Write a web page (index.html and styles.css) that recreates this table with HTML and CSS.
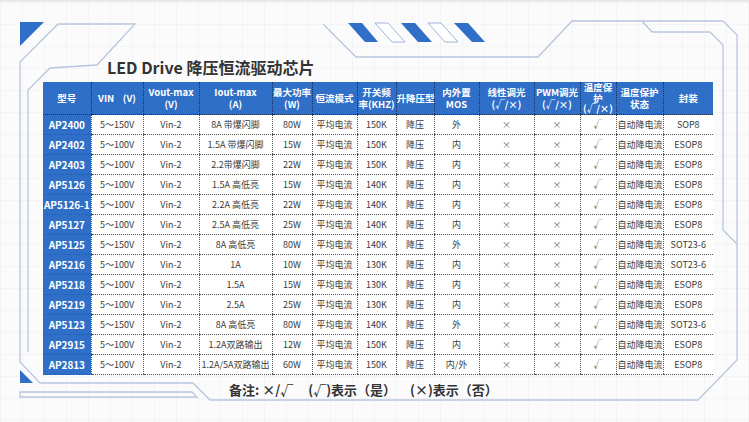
FILE: index.html
```html
<!DOCTYPE html>
<html lang="zh-CN">
<head>
<meta charset="utf-8">
<title>LED Drive 降压恒流驱动芯片</title>
<link rel="stylesheet" href="styles.css">
</head>
<body>
<div class="page">
  <svg class="decor" width="749" height="422" viewBox="0 0 749 422" aria-hidden="true">
    <g class="line">
      <path d="M28,352 L28,90 L50,68 L97,65 L135,24 L58,24 L20,62 L20,362 L40,383 L193,383 L210,400 L698,400 L737,360 L737,35 L723,21 L572,21 L538,57 L356,57 L323,24"/>
      <path d="M642,21 L652,32 L710,32 L723,45 L723,230 L737,244"/>
      <path d="M20,392 L192,392 L197,397 L20,397 Z"/>
    </g>
    <g class="blue">
      <polygon points="20,22 44,22 20,46"/>
      <polygon points="20,370 20,383 33,383"/>
      <polygon points="348,23 362,23 378,42 365,42"/>
      <polygon points="401,23 415,23 432,42 418,42"/>
      <polygon points="454,23 468,23 485,42 472,42"/>
    </g>
    <g class="hollow">
      <polygon points="375,23 388,23 405,42 392,42"/>
      <polygon points="428,23 441,23 458,42 445,42"/>
    </g>
  </svg>
  <div class="content">
    <h1 class="title">LED Drive 降压恒流驱动芯片</h1>
    <table class="spec">
      <colgroup>
        <col class="w48"><col class="w52"><col class="w56"><col class="w73"><col class="w40"><col class="w45"><col class="w39"><col class="w38"><col class="w45"><col class="w55"><col class="w46"><col class="w36"><col class="w47"><col class="w50">
      </colgroup>
      <thead>
        <tr>
          <th>型号</th>
          <th class="pre">VIN    (V)</th>
          <th>Vout-max<br>(V)</th>
          <th>Iout-max<br>(A)</th>
          <th>最大功率<br>(W)</th>
          <th>恒流模式</th>
          <th>开关频<br>率(KHZ)</th>
          <th>升降压型</th>
          <th>内外置<br>MOS</th>
          <th>线性调光<br>(√/×)</th>
          <th>PWM调光<br>(√/×)</th>
          <th class="tri">温度保<br>护<br>(√/×)</th>
          <th>温度保护<br>状态</th>
          <th>封装</th>
        </tr>
      </thead>
      <tbody>
        <tr><td class="model">AP2400</td><td>5～150V</td><td>Vin-2</td><td>8A 带爆闪脚</td><td>80W</td><td>平均电流</td><td>150K</td><td>降压</td><td>外</td><td class="mk">×</td><td class="mk">×</td><td class="mk">√</td><td class="left">自动降电流</td><td>SOP8</td></tr>
        <tr><td class="model">AP2402</td><td>5～100V</td><td>Vin-2</td><td>1.5A 带爆闪脚</td><td>15W</td><td>平均电流</td><td>150K</td><td>降压</td><td>内</td><td class="mk">×</td><td class="mk">×</td><td class="mk">√</td><td class="left">自动降电流</td><td>ESOP8</td></tr>
        <tr><td class="model">AP2403</td><td>5～100V</td><td>Vin-2</td><td>2.2带爆闪脚</td><td>22W</td><td>平均电流</td><td>150K</td><td>降压</td><td>内</td><td class="mk">×</td><td class="mk">×</td><td class="mk">√</td><td class="left">自动降电流</td><td>ESOP8</td></tr>
        <tr><td class="model">AP5126</td><td>5～100V</td><td>Vin-2</td><td>1.5A 高低亮</td><td>15W</td><td>平均电流</td><td>140K</td><td>降压</td><td>内</td><td class="mk">×</td><td class="mk">×</td><td class="mk">√</td><td class="left">自动降电流</td><td>ESOP8</td></tr>
        <tr><td class="model">AP5126-1</td><td>5～100V</td><td>Vin-2</td><td>2.2A 高低亮</td><td>22W</td><td>平均电流</td><td>140K</td><td>降压</td><td>内</td><td class="mk">×</td><td class="mk">×</td><td class="mk">√</td><td class="left">自动降电流</td><td>ESOP8</td></tr>
        <tr><td class="model">AP5127</td><td>5～100V</td><td>Vin-2</td><td>2.5A 高低亮</td><td>25W</td><td>平均电流</td><td>140K</td><td>降压</td><td>内</td><td class="mk">×</td><td class="mk">×</td><td class="mk">√</td><td class="left">自动降电流</td><td>ESOP8</td></tr>
        <tr><td class="model">AP5125</td><td>5～150V</td><td>Vin-2</td><td>8A 高低亮</td><td>80W</td><td>平均电流</td><td>140K</td><td>降压</td><td>外</td><td class="mk">×</td><td class="mk">×</td><td class="mk">√</td><td class="left">自动降电流</td><td>SOT23-6</td></tr>
        <tr><td class="model">AP5216</td><td>5～100V</td><td>Vin-2</td><td>1A</td><td>10W</td><td>平均电流</td><td>130K</td><td>降压</td><td>内</td><td class="mk">×</td><td class="mk">×</td><td class="mk">√</td><td class="left">自动降电流</td><td>SOT23-6</td></tr>
        <tr><td class="model">AP5218</td><td>5～100V</td><td>Vin-2</td><td>1.5A</td><td>15W</td><td>平均电流</td><td>130K</td><td>降压</td><td>内</td><td class="mk">×</td><td class="mk">×</td><td class="mk">√</td><td class="left">自动降电流</td><td>ESOP8</td></tr>
        <tr><td class="model">AP5219</td><td>5～100V</td><td>Vin-2</td><td>2.5A</td><td>25W</td><td>平均电流</td><td>130K</td><td>降压</td><td>内</td><td class="mk">×</td><td class="mk">×</td><td class="mk">√</td><td class="left">自动降电流</td><td>ESOP8</td></tr>
        <tr><td class="model">AP5123</td><td>5～150V</td><td>Vin-2</td><td>8A 高低亮</td><td>80W</td><td>平均电流</td><td>140K</td><td>降压</td><td>外</td><td class="mk">×</td><td class="mk">×</td><td class="mk">√</td><td class="left">自动降电流</td><td>SOT23-6</td></tr>
        <tr><td class="model">AP2915</td><td>5～100V</td><td>Vin-2</td><td>1.2A双路输出</td><td>12W</td><td>平均电流</td><td>150K</td><td>降压</td><td>内</td><td class="mk">×</td><td class="mk">×</td><td class="mk">√</td><td class="left">自动降电流</td><td>ESOP8</td></tr>
        <tr><td class="model">AP2813</td><td>5～100V</td><td>Vin-2</td><td>1.2A/5A双路输出</td><td>60W</td><td>平均电流</td><td>150K</td><td>降压</td><td>内/外</td><td class="mk">×</td><td class="mk">×</td><td class="mk">√</td><td class="left">自动降电流</td><td>ESOP8</td></tr>
      </tbody>
    </table>
    <p class="note"><span>备注: ×/√</span><span class="gap1">(√)表示（是）</span><span class="gap2">(×)表示（否）</span></p>
  </div>
</div>
</body>
</html>
```
FILE: styles.css
```css
html, body {
  margin: 0;
  padding: 0;
}
body {
  font-family: "Noto Sans CJK SC", "Noto Sans", sans-serif;
  color: #333;
}
.page {
  position: relative;
  width: 749px;
  height: 422px;
  overflow: hidden;
  box-sizing: border-box;
  border-top: 2px solid #e8e9eb;
  background-color: #fbfbfc;
  background-image:
    linear-gradient(rgba(120,130,150,0.05) 1px, transparent 1px),
    linear-gradient(90deg, rgba(120,130,150,0.05) 1px, transparent 1px);
  background-size: 22px 22px;
}
.decor {
  position: absolute;
  left: 0;
  top: -2px;
}
.decor .line path {
  fill: none;
  stroke: #b8c6dd;
  stroke-width: 1.3;
}
.decor .blue polygon {
  fill: #2f6fc7;
}
.decor .hollow polygon {
  fill: #fff;
  stroke: #9fb4d8;
  stroke-width: 1;
}
.content {
  position: relative;
  z-index: 1;
  padding: 54px 0 0 43px;
}
.title {
  margin: 0 0 4px 64px;
  font-size: 16px;
  line-height: 22px;
  font-weight: 700;
  color: #333;
}
.spec {
  border-collapse: collapse;
  table-layout: fixed;
  width: 670px;
}
.w48 { width: 48px; }
.w52 { width: 52px; }
.w56 { width: 56px; }
.w73 { width: 73px; }
.w40 { width: 40px; }
.w45 { width: 45px; }
.w39 { width: 39px; }
.w38 { width: 38px; }
.w55 { width: 55px; }
.w46 { width: 46px; }
.w36 { width: 36px; }
.w47 { width: 47px; }
.w50 { width: 50px; }
.spec th {
  height: 32px;
  padding: 0;
  background: #2f6fc7;
  color: #fff;
  font-size: 9.5px;
  line-height: 12px;
  font-weight: 700;
  white-space: nowrap;
  text-align: center;
  border-left: 1px dotted #1b2c52;
  border-bottom: 1px dotted #1b2c52;
}
.spec th.tri {
  line-height: 10.5px;
}
.spec th:first-child {
  border-left: none;
}
.spec th.pre {
  white-space: pre;
}
.spec td {
  height: 19px;
  padding: 0;
  background: #fff;
  color: #3a3a3a;
  font-size: 9px;
  line-height: 12px;
  text-align: center;
  white-space: nowrap;
  border-left: 1px dotted #555;
  border-bottom: 1px dotted #555;
}
.spec td.model {
  border-left: none;
  background: #2f6fc7;
  color: #fff;
  font-size: 10px;
  font-weight: 700;
  letter-spacing: -0.1px;
}
.spec td.mk {
  color: #666;
}
.spec td.left {
  text-align: left;
  padding-left: 1px;
}
.note {
  margin: 6px 0 0 186px;
  font-size: 13px;
  line-height: 18px;
  font-weight: 700;
  color: #333;
}
.gap1 {
  margin-left: 15px;
}
.gap2 {
  margin-left: 14px;
}
```
